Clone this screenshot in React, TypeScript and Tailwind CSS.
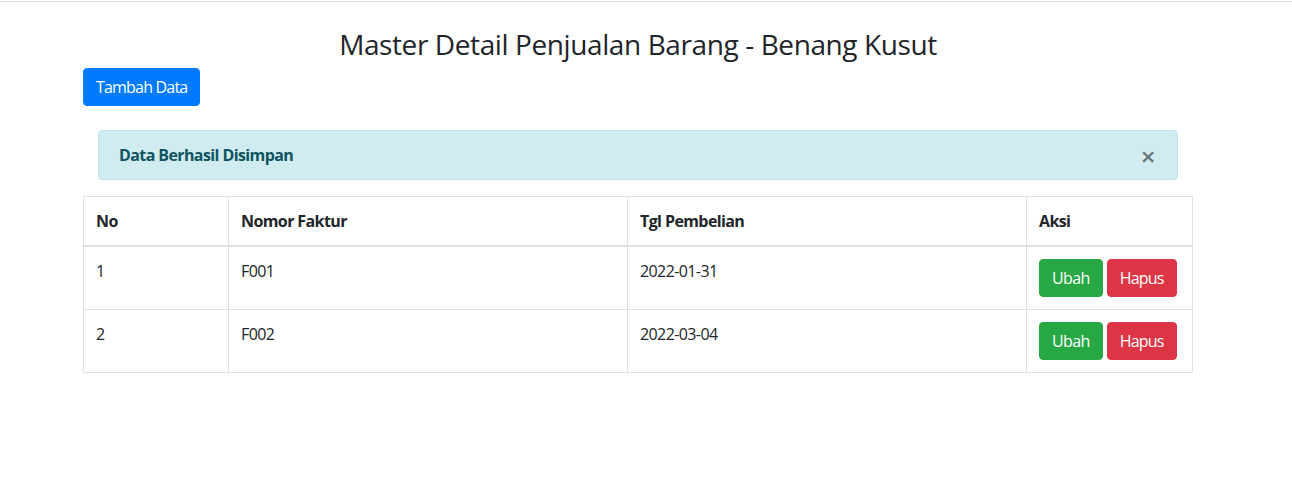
const rows = [
  { no: 1, faktur: "F001", tgl: "2022-01-31" },
  { no: 2, faktur: "F002", tgl: "2022-03-04" },
];

export default function App() {
  return (
    <div className="min-h-[503px] bg-white font-['Open_Sans',sans-serif] text-[16px] leading-6 tracking-[-0.6px] text-[#212529]">
      <div className="mt-px border-t border-[#dee2e6]" />
      <div className="ml-[83px] w-[1110px]">
        <h3 className="mt-[26px] mb-[6px] text-center text-[28px] leading-[1.2] font-medium tracking-[-0.4px]">
          Master Detail Penjualan Barang - Benang Kusut
        </h3>
        <button className="h-[38px] rounded-[4px] border border-[#007bff] bg-[#007bff] px-3 tracking-[-0.8px] text-white">
          Tambah Data
        </button>

        <div className="mx-[15px] mt-6 mb-4 flex h-[50px] items-center justify-between rounded-[4px] border border-[#bee5eb] bg-[#d1ecf1] px-5 text-[#0c5460]">
          <strong className="font-bold">Data Berhasil Disimpan</strong>
          <span className="mt-[2px] mr-[2px] text-[26px] leading-none font-semibold text-black opacity-50">
            &times;
          </span>
        </div>

        <table className="w-full table-fixed border-collapse">
          <colgroup>
            <col className="w-[145px]" />
            <col className="w-[399px]" />
            <col className="w-[399px]" />
            <col />
          </colgroup>
          <thead>
            <tr>
              <th className="border border-b-2 border-[#dee2e6] p-3 text-left font-bold">No</th>
              <th className="border border-b-2 border-[#dee2e6] p-3 text-left font-bold">Nomor Faktur</th>
              <th className="border border-b-2 border-[#dee2e6] p-3 text-left font-bold">Tgl Pembelian</th>
              <th className="border border-b-2 border-[#dee2e6] p-3 text-left font-bold">Aksi</th>
            </tr>
          </thead>
          <tbody>
            {rows.map((r) => (
              <tr key={r.no}>
                <td className="border border-[#dee2e6] p-3 align-top">{r.no}</td>
                <td className="border border-[#dee2e6] p-3 align-top">{r.faktur}</td>
                <td className="border border-[#dee2e6] p-3 align-top">{r.tgl}</td>
                <td className="border border-[#dee2e6] p-3 align-top">
                  <div className="flex gap-[4px]">
                    <button className="h-[38px] rounded-[4px] border border-[#28a745] bg-[#28a745] px-3 text-white">
                      Ubah
                    </button>
                    <button className="h-[38px] rounded-[4px] border border-[#dc3545] bg-[#dc3545] px-3 tracking-[-0.8px] text-white">
                      Hapus
                    </button>
                  </div>
                </td>
              </tr>
            ))}
          </tbody>
        </table>
      </div>
    </div>
  );
}
